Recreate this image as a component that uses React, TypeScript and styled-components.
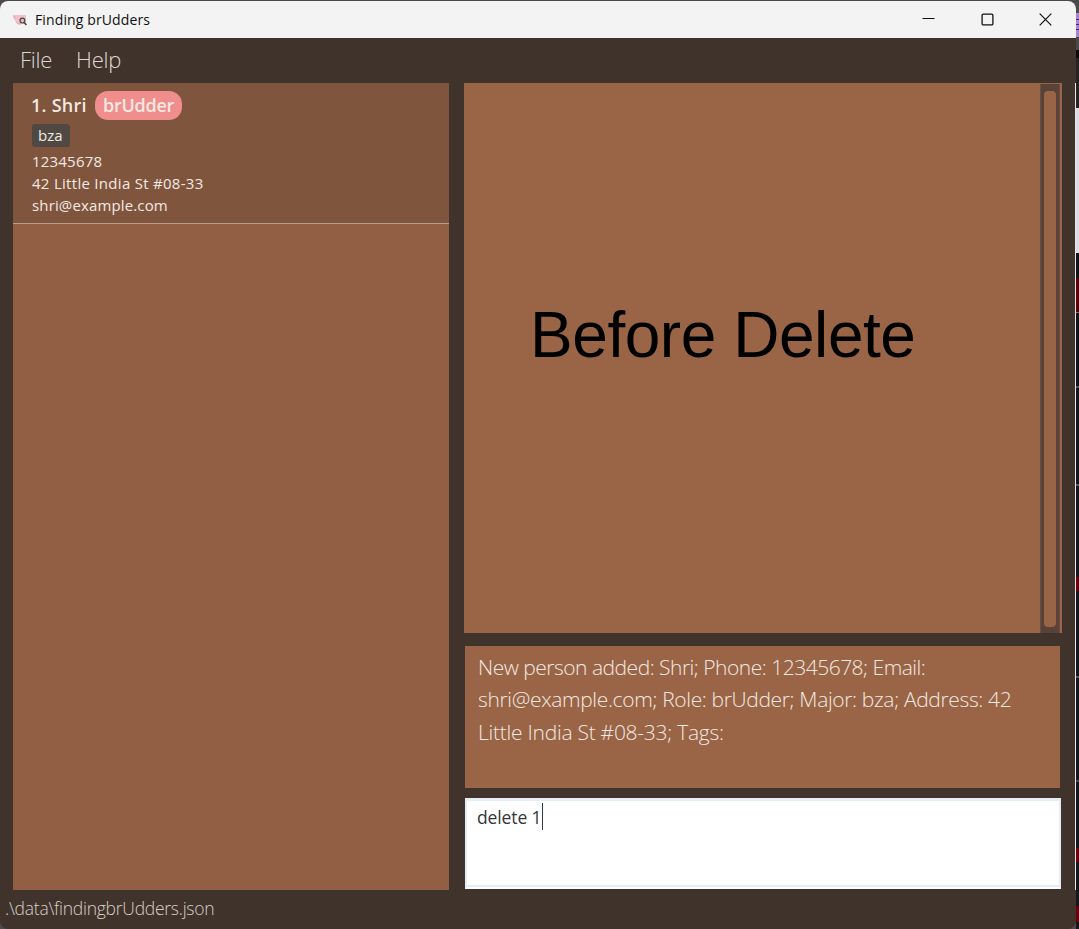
import React from "react";
import styled, { createGlobalStyle } from "styled-components";

const GlobalStyle = createGlobalStyle`
  * { box-sizing: border-box; }
  body {
    margin: 0;
    overflow: hidden;
    font-family: "Open Sans", "Noto Sans", sans-serif;
  }
`;

const Desktop = styled.div`
  width: 1079px;
  height: 929px;
  display: grid;
  grid-template-columns: 1076px 3px;
  background: #4b4b4d;
`;

const DesktopEdge = styled.div`
  background: linear-gradient(
    #4b4b4d 0 13px, #a983d6 13px 19px, #43305c 19px 20px, #a983d6 20px 24px,
    #43305c 24px 25px, #a983d6 25px 29px, #43305c 29px 30px, #a983d6 30px 37px,
    #4b4b4d 37px 50px, #0c0c0e 50px 58px, #242426 58px 108px, #dcdce3 108px 253px,
    #11151b 253px 278px, #5c0007 278px 312px, #94636a 312px 313px, #11151b 313px 386px,
    #55575c 386px 388px, #14171c 388px 484px, #55575c 484px 486px, #14171c 486px 577px,
    #6d0008 577px 591px, #14171c 591px 676px, #55575c 676px 678px, #14171c 678px 780px,
    #44464b 780px 782px, #14171c 782px 848px, #6d0008 848px 862px, #14171c 862px 906px,
    #6d0008 906px 922px, #14171c 922px
  );
`;

const Window = styled.main`
  margin-top: 1px;
  height: 928px;
  display: grid;
  grid-template-rows: 37px 45px 807px 39px;
  border-radius: 8px;
  overflow: hidden;
  background: #40332b;
`;

const TitleBar = styled.header`
  display: flex;
  align-items: center;
  background: #f3f3f3;
  padding-left: 12px;
`;

const AppIcon = styled.svg`
  width: 16px;
  height: 16px;
  margin-right: 7px;
`;

const Text = styled.span<{
  $size: number; $line: number; $color?: string; $weight?: number; $track?: number;
}>`
  display: block;
  white-space: pre;
  font-size: ${(p) => p.$size}px;
  line-height: ${(p) => p.$line}px;
  font-weight: ${(p) => p.$weight ?? 400};
  letter-spacing: ${(p) => p.$track ?? 0}px;
  color: ${(p) => p.$color ?? "#f3e9e2"};
`;

const WindowControls = styled.div`
  display: flex;
  margin-left: auto;
  padding-right: 1px;
`;

const ControlButton = styled.button`
  width: 58.5px;
  height: 37px;
  padding: 0;
  border: 0;
  background: none;
  display: grid;
  place-items: center;
`;

const MenuBar = styled.nav`
  display: flex;
  gap: 24px;
  padding: 5px 20px 0;
`;

const Content = styled.div`
  display: grid;
  grid-template-columns: 436px 598px;
  column-gap: 15px;
  padding-left: 13px;
  position: relative;
`;

const EdgeLine = styled.i`
  position: absolute;
  right: 0;
  top: 0;
  width: 1px;
  height: 807px;
  background: #e9e7e6;
`;

const PersonList = styled.section`
  background: #935f44;
`;

const PersonCard = styled.article`
  height: 141px;
  padding: 8px 19px 0;
  background: #80553e;
  border-bottom: 1px solid #b99c8c;
`;

const NameRow = styled.div`
  display: flex;
  height: 29px;
`;

const RoleBadge = styled.span`
  height: 29px;
  width: 87px;
  margin-left: 8px;
  border-radius: 13px;
  background: #f08e8d;
  display: flex;
  justify-content: center;
`;

const NameSlot = styled.div`
  width: 55px;
  margin-left: -1px;
  margin-right: 1px;
`;

const MajorTag = styled.div`
  width: 38px;
  height: 23px;
  margin: 4px 0 3px;
  padding-left: 6px;
  border-radius: 3px;
  background: #504943;
`;

const Side = styled.div`
  display: grid;
  grid-template-rows: 550px 142px 89px;
  row-gap: 13px;
`;

const Details = styled.section`
  display: grid;
  grid-template-columns: 576px 20px;
  background: #996546;
`;

const Heading = styled.h1`
  margin: 216px 0 0 66px;
  font: 400 64px/72px "Liberation Sans", Arial, sans-serif;
  letter-spacing: -0.45px;
  white-space: nowrap;
  color: #000;
`;

const ScrollTrack = styled.div`
  margin: 1px 0 0 0;
  padding: 7px 3px 6px 3px;
  border: solid #6d4d3d;
  border-width: 0 1px;
  background: #594237;
`;

const ScrollThumb = styled.div`
  height: 100%;
  border-radius: 4px;
  background: #996546;
`;

const Result = styled.section`
  width: 595px;
  margin-left: 1px;
  padding: 5px 13px;
  background: #996546;
`;

const Command = styled.div`
  width: 596px;
  height: 91px;
  margin: -3px 0 0 1px;
  padding: 3px 10px;
  border: 2px solid #e5eff3;
  border-top-width: 3px;
  border-bottom-color: #fff;
  box-shadow: inset 0 -2px #e5eff3;
  background: #fff;
  display: flex;
`;

const Caret = styled.i`
  width: 1px;
  height: 27px;
  margin: -1px 0 0 1px;
  background: #33363a;
`;

const StatusBar = styled.footer`
  padding: 3px 5px;
`;

const App = () => (
  <>
    <GlobalStyle />
    <Desktop>
      <Window>
        <TitleBar>
          <AppIcon viewBox="0 0 16 16" fill="none">
            <path d="M1 3.5Q1 3 2 3H13.5Q14 3 14 4V12H5.5L4 9.5L1.5 6.5Z" fill="#efc3c6" />
            <path d="M1.2 3.5L4 6.5M4 9.5L6 12H9" stroke="#dba7ab" />
            <circle cx="10.4" cy="8.6" r="2.4" fill="#dcbfc1" stroke="#4e4346" strokeWidth="1.2" />
            <path d="M12.2 10.4L14.4 13" stroke="#4e4346" strokeWidth="1.6" />
          </AppIcon>
          <Text $size={14} $line={20} $track={0.12} $color="#111">Finding brUdders</Text>
          <WindowControls>
            <ControlButton aria-label="Minimize">
              <svg width="13" height="13" stroke="#111" fill="none"><path d="M.5 5.5h12" /></svg>
            </ControlButton>
            <ControlButton aria-label="Maximize">
              <svg width="13" height="13" stroke="#111" fill="none">
                <rect x="1.1" y="1.1" width="10.8" height="10.8" rx="1.2" strokeWidth="1.3" />
              </svg>
            </ControlButton>
            <ControlButton aria-label="Close">
              <svg width="13" height="13" stroke="#111" fill="none">
                <path d="M.7.7l11.6 11.6M12.3.7L.7 12.3" strokeWidth="1.2" />
              </svg>
            </ControlButton>
          </WindowControls>
        </TitleBar>
        <MenuBar>
          <Text $size={22} $line={32} $weight={300} $track={-0.25} $color="#dfd8d2">File</Text>
          <Text $size={22} $line={32} $weight={300} $track={-0.25} $color="#dfd8d2">Help</Text>
        </MenuBar>
        <Content>
          <PersonList>
            <PersonCard>
              <NameRow>
                <NameSlot><Text $size={18} $line={28} $weight={600} $track={0.25}>1. Shri</Text></NameSlot>
                <RoleBadge><Text $size={18} $line={28} $weight={600} $track={-0.25}>brUdder</Text></RoleBadge>
              </NameRow>
              <MajorTag><Text $size={15} $line={23}>bza</Text></MajorTag>
              <Text $size={15} $line={22} $track={0.2}>12345678</Text>
              <Text $size={15} $line={22} $track={0.29}>42 Little India St #08-33</Text>
              <Text $size={15} $line={22} $track={0.14}>shri@example.com</Text>
            </PersonCard>
          </PersonList>
          <Side>
            <Details>
              <Heading>Before Delete</Heading>
              <ScrollTrack><ScrollThumb /></ScrollTrack>
            </Details>
            <Result>
              <Text $size={21} $line={32} $weight={300} $track={-0.5}>New person added: Shri; Phone: 12345678; Email:</Text>
              <Text $size={21} $line={32} $weight={300} $track={-0.35}>shri@example.com; Role: brUdder; Major: bza; Address: 42</Text>
              <Text $size={21} $line={34} $weight={300} $track={-0.26}>Little India St #08-33; Tags:</Text>
            </Result>
            <Command>
              <Text $size={17.5} $line={26} $track={-0.12} $color="#33363a">delete 1</Text>
              <Caret />
            </Command>
          </Side>
          <EdgeLine />
        </Content>
        <StatusBar>
          <Text $size={17.5} $line={30} $weight={300} $track={-0.26} $color="#d6cfc9">.\data\findingbrUdders.json</Text>
        </StatusBar>
      </Window>
      <DesktopEdge />
    </Desktop>
  </>
);

export default App;
